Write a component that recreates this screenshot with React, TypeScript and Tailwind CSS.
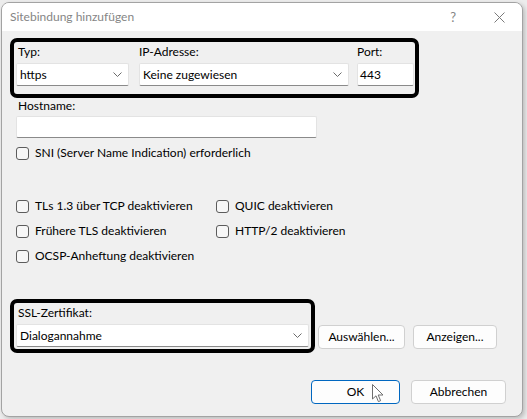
import React from 'react';

const Chevron: React.FC = () => (
  <svg width="9" height="5" viewBox="0 0 9 5" className="shrink-0">
    <path d="M0.5 0.5 L4.5 4.5 L8.5 0.5" fill="none" stroke="#6b6b6b" strokeWidth="1" />
  </svg>
);

const Combo: React.FC<{ text: string; className: string }> = ({ text, className }) => (
  <div
    className={`flex h-[23px] items-center justify-between rounded-[2px] border border-[#e3e3e3] border-b-[#8a8a8a] bg-white pl-[3px] pr-[6px] ${className}`}
  >
    <span>{text}</span>
    <Chevron />
  </div>
);

const Check: React.FC<{ label: string }> = ({ label }) => (
  <div className="flex h-[16px] items-center">
    <span className="h-[13px] w-[13px] shrink-0 rounded-[3px] border border-[#5c5c5c] bg-[#f7f7f7]" />
    <span className="ml-[6px]">{label}</span>
  </div>
);

const Button: React.FC<{ label: string; className: string }> = ({ label, className }) => (
  <button
    className={`flex h-[24px] items-center justify-center rounded-[4px] border bg-[#fdfdfd] text-black ${className}`}
  >
    {label}
  </button>
);

// Mouse pointer resting on the OK button
const Cursor: React.FC = () => (
  <svg width="12" height="19" viewBox="0 0 12 19" className="absolute left-[61px] top-[4px]">
    <path
      d="M0.5 0.5 L0.5 15 L4 11.8 L6.4 17.6 L8.6 16.7 L6.2 11 L11 11 Z"
      fill="#ffffff"
      stroke="#6e6e6e"
      strokeWidth="1"
      strokeLinejoin="round"
    />
  </svg>
);

const App: React.FC = () => {
  return (
    <div className="h-[419px] w-[527px] overflow-hidden bg-[#ececec] pl-[1px] pt-[2px] font-['Lato',sans-serif] text-[12px] leading-[16px] text-black">
      <div className="flex h-[415px] w-[522px] flex-col overflow-hidden rounded-[8px] border border-[#a3a3a3] bg-[#f0f0f0] shadow-[2px_2px_4px_rgba(0,0,0,0.2)]">
        {/* Title bar */}
        <div className="flex h-[28px] shrink-0 items-center justify-between bg-white pl-[8px] text-[#858585]">
          <span className="text-[12px]">Sitebindung hinzufügen</span>
          <div className="flex items-center">
            <span className="mr-[38px] text-[13px]">?</span>
            <svg width="11" height="11" viewBox="0 0 11 11" className="mr-[17px]">
              <path d="M0.5 0.5 L10.5 10.5 M10.5 0.5 L0.5 10.5" stroke="#7a7a7a" strokeWidth="1" />
            </svg>
          </div>
        </div>

        {/* Body */}
        <div className="flex flex-1 flex-col pl-[8px]">
          {/* Typ / IP / Port */}
          <div className="mt-[7px] w-[409px] rounded-[7px] border-4 border-black pb-[8px] pl-[2px] pr-[1px] pt-[2px]">
            <div className="flex gap-[10px]">
              <div className="flex w-[113px] flex-col">
                <span className="pl-[2px]">Typ:</span>
                <Combo text="https" className="mt-[3px] w-[113px]" />
              </div>
              <div className="flex w-[210px] flex-col">
                <span>IP-Adresse:</span>
                <Combo text="Keine zugewiesen" className="mt-[3px] w-[210px]" />
              </div>
              <div className="ml-[-2px] flex w-[57px] flex-col">
                <span>Port:</span>
                <div className="mt-[3px] flex h-[23px] items-center rounded-[2px] border border-[#e3e3e3] border-b-[#8a8a8a] bg-white pl-[2px]">
                  443
                </div>
              </div>
            </div>
          </div>

          {/* Hostname */}
          <div className="ml-[6px] flex flex-col">
            <span className="pl-[2px]">Hostname:</span>
            <div className="mt-[2px] h-[22px] w-[301px] rounded-[2px] border border-[#e3e3e3] border-b-[#8a8a8a] bg-white" />
            <div className="mt-[7px]">
              <Check label="SNI (Server Name Indication) erforderlich" />
            </div>

            <div className="mt-[37px] grid w-[360px] grid-cols-[200px_1fr] gap-y-[9px]">
              <Check label="TLs 1.3 über TCP deaktivieren" />
              <Check label="QUIC deaktivieren" />
              <Check label="Frühere TLS deaktivieren" />
              <Check label="HTTP/2 deaktivieren" />
              <Check label="OCSP-Anheftung deaktivieren" />
            </div>
          </div>

          {/* SSL certificate */}
          <div className="mt-[35px] flex items-end">
            <div className="w-[305px] rounded-[7px] border-4 border-black px-[2px] pb-[2px] pt-[2px]">
              <span className="pl-[2px]">SSL-Zertifikat:</span>
              <Combo text="Dialogannahme" className="mt-[3px] w-[293px]" />
            </div>
            <div className="mb-[4px] ml-[3px] flex gap-[8px]">
              <Button label="Auswählen..." className="w-[87px] border-[#d0d0d0]" />
              <Button label="Anzeigen..." className="w-[84px] border-[#d0d0d0]" />
            </div>
          </div>

          {/* Dialog buttons */}
          <div className="mt-[27px] flex gap-[11px] pl-[301px]">
            <div className="relative">
              <Button label="OK" className="w-[89px] border-[#0067c0]" />
              <Cursor />
            </div>
            <Button label="Abbrechen" className="w-[95px] border-[#d0d0d0]" />
          </div>
        </div>
      </div>
    </div>
  );
};

export default App;
